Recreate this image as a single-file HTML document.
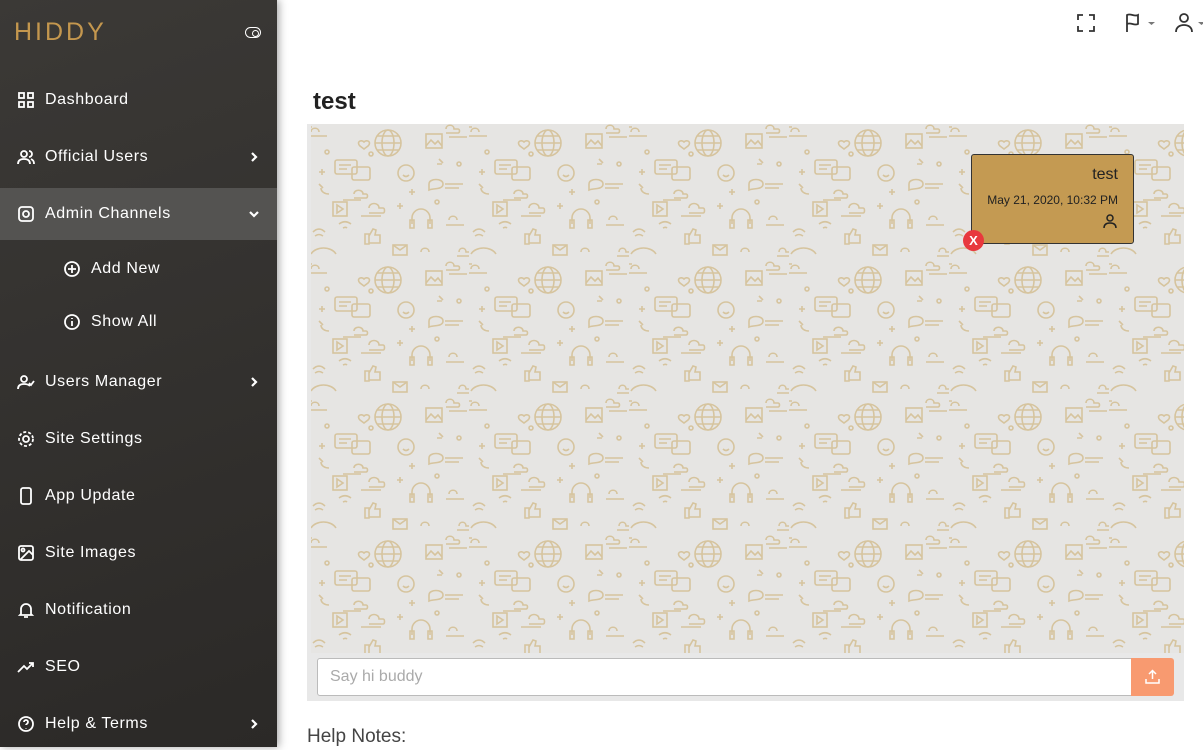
<!DOCTYPE html>
<html><head><meta charset="utf-8"><style>
*{box-sizing:border-box;margin:0;padding:0}
body{width:1203px;height:747px;overflow:hidden;font-family:"Liberation Sans",sans-serif;background:#fff;position:relative}
.sb{position:absolute;left:0;top:0;width:277px;height:747px;background:linear-gradient(160deg,#3b3936,#2b2927);box-shadow:2px 0 8px rgba(0,0,0,.35);color:#fff}
.logo{position:absolute;left:14px;top:18px;font-size:25px;letter-spacing:3px;color:#c4974e}
.tog{position:absolute;left:245px;top:27px;width:16px;height:11px;border:1.6px solid #fff;border-radius:6px}
.tog:after{content:"";position:absolute;right:1px;top:1.5px;width:5px;height:5px;border:1.5px solid #fff;border-radius:50%}
.it{position:absolute;left:0;width:277px;height:52px;display:flex;align-items:center;font-size:16px;letter-spacing:.6px}
.it svg{position:absolute;left:17px;width:18px;height:18px;fill:none;stroke:#fff;stroke-width:1.8}
.it span{position:absolute;left:45px}
.it svg.ar{left:247px;width:14px;height:14px;stroke-width:2.2}
.sub svg{left:63px}.sub span{left:91px}
.act{background:#545351}
.top svg{position:absolute;fill:none;stroke:#333;stroke-width:1.8}
h1{position:absolute;left:313px;top:88px;font-size:24px;font-weight:bold;color:#222}
.chat{position:absolute;left:307px;top:124px;width:877px;height:577px;background:#e8e8e8}
.pat{position:absolute;left:4px;top:0;width:873px;height:529px;background:#e6e5e3}
.msg{position:absolute;left:971px;top:154px;width:163px;height:90px;background:#c49a52;border:1px solid #333;border-radius:3px}
.x{position:absolute;left:963px;top:230px;width:21px;height:21px;border-radius:50%;background:#e8383d;color:#fff;font-size:13px;font-weight:bold;text-align:center;line-height:21px}
.inp{position:absolute;left:317px;top:658px;width:815px;height:38px;background:#fff;border:1px solid #bbb;border-radius:3px 0 0 3px;color:#aaa;font-size:16px;padding:9px 12px}
.btn{position:absolute;left:1131px;top:658px;width:43px;height:38px;background:#f89a70;border-radius:0 3px 3px 0}
.help{position:absolute;left:307px;top:726px;font-size:19px;color:#444}
</style></head><body>
<div class="sb">
<div class="logo">HIDDY</div><div class="tog"></div>
<div class="it" style="top:74px"><svg viewBox="0 0 18 18"><rect x="2" y="2" width="5" height="5"/><rect x="11" y="2" width="5" height="5"/><rect x="2" y="11" width="5" height="5"/><rect x="11" y="11" width="5" height="5"/></svg><span>Dashboard</span></div>
<div class="it" style="top:131px"><svg viewBox="0 0 18 18"><circle cx="7" cy="6" r="3"/><path d="M1 16c0-4 3-5 6-5s6 1 6 5M12 3a3 3 0 010 6M14 11c2 1 3 2 3 5"/></svg><span>Official Users</span><svg class="ar" viewBox="0 0 14 14"><path d="M5 3l4 4-4 4"/></svg></div>
<div class="it act" style="top:188px"><svg viewBox="0 0 18 18"><rect x="2" y="2" width="14" height="14" rx="3"/><circle cx="9" cy="9" r="3"/></svg><span>Admin Channels</span><svg class="ar" viewBox="0 0 14 14"><path d="M3 5l4 4 4-4"/></svg></div>
<div class="it sub" style="top:243px"><svg viewBox="0 0 18 18"><circle cx="9" cy="9" r="7"/><path d="M9 5v8M5 9h8"/></svg><span>Add New</span></div>
<div class="it sub" style="top:296px"><svg viewBox="0 0 18 18"><circle cx="9" cy="9" r="7"/><path d="M9 8v5M9 5v1"/></svg><span>Show All</span></div>
<div class="it" style="top:356px"><svg viewBox="0 0 18 18"><circle cx="7" cy="6" r="3"/><path d="M1 16c0-4 3-5 6-5s5 1 6 2M12 10l2 2 3-4"/></svg><span>Users Manager</span><svg class="ar" viewBox="0 0 14 14"><path d="M5 3l4 4-4 4"/></svg></div>
<div class="it" style="top:413px"><svg viewBox="0 0 18 18"><circle cx="9" cy="9" r="3"/><circle cx="9" cy="9" r="7" stroke-dasharray="3 2"/></svg><span>Site Settings</span></div>
<div class="it" style="top:470px"><svg viewBox="0 0 18 18"><rect x="4" y="1" width="10" height="16" rx="2"/></svg><span>App Update</span></div>
<div class="it" style="top:527px"><svg viewBox="0 0 18 18"><rect x="2" y="2" width="14" height="14" rx="2"/><circle cx="6" cy="6" r="1.5"/><path d="M16 11l-4-4-9 9"/></svg><span>Site Images</span></div>
<div class="it" style="top:584px"><svg viewBox="0 0 18 18"><path d="M4 13V8a5 5 0 0110 0v5l1 1H3zM7 16h4"/></svg><span>Notification</span></div>
<div class="it" style="top:641px"><svg viewBox="0 0 18 18"><path d="M1 14l6-6 3 3 6-6M12 5h4v4"/></svg><span>SEO</span></div>
<div class="it" style="top:698px"><svg viewBox="0 0 18 18"><circle cx="9" cy="9" r="7"/><path d="M7 7a2 2 0 114 0c0 2-2 2-2 3M9 13v.5"/></svg><span>Help &amp; Terms</span><svg class="ar" viewBox="0 0 14 14"><path d="M5 3l4 4-4 4"/></svg></div>
</div>
<div class="top">
<svg style="left:1076px;top:13px" width="20" height="20" viewBox="0 0 20 20"><path d="M2 7V2h5M13 2h5v5M18 13v5h-5M7 18H2v-5"/></svg>
<svg style="left:1124px;top:12px" width="36" height="22" viewBox="0 0 36 22"><path d="M3 20V3c4-2 7 2 11 0v9c-4 2-7-2-11 0"/><path d="M24 10h7l-3.5 3z" fill="#777" stroke="none"/></svg>
<svg style="left:1174px;top:12px" width="29" height="22" viewBox="0 0 29 22"><circle cx="10" cy="6" r="4"/><path d="M2 20c0-5 4-7 8-7s8 2 8 7"/><path d="M24 10h7l-3.5 3z" fill="#777" stroke="none"/></svg>
</div>
<h1>test</h1>
<div class="chat"><div class="pat"><svg width="873" height="529"><defs><pattern id="p" width="160" height="137" patternUnits="userSpaceOnUse" x="-2" y="0"><g fill="none" stroke="#d6c49e" stroke-width="1.6">
<circle cx="79" cy="19" r="13"/><ellipse cx="79" cy="19" rx="6" ry="13"/><path d="M66 19h26M68 12h22M68 26h22"/>
<path d="M55 18c-3-3-8 0-4 4l4 3 4-3c4-4-1-7-4-4z"/>
<rect x="117" y="10" width="16" height="14"/><path d="M117 22l5-6 4 4 3-3 4 5"/>
<rect x="26" y="36" width="22" height="14" rx="2"/><rect x="43" y="43" width="18" height="13" rx="2"/><path d="M30 41h12M30 45h8"/>
<circle cx="97" cy="49" r="8"/><path d="M94 51c2 2 4 2 6 0"/>
<path d="M120 60c0-6 14-6 14 0s-10 4-14 6z"/><path d="M136 60h18M136 64h14"/>
<path d="M34 76h18M45 70c0-5 9-5 9 0h3c2 0 2 4 0 4h-12"/>
<path d="M2 8c0-5 8-5 8 0M0 12h18M0 3h3"/>
<path d="M137 5c0-5 8-5 8 0h4c2 0 2 4 0 4h-12M140 13h18"/>
<rect x="24" y="78" width="14" height="14"/><path d="M28 81v8l6-4z"/>
<path d="M103 100v-6a9 9 0 0118 0v6M101 96h4v8h-4zM119 96h4v8h-4z"/>
<path d="M140 96c0-5 8-5 8 0M137 101h18"/>
<path d="M56 110h4v10h-4zM60 112l4-7 3 1-1 5h5v8h-11"/>
<path d="M150 128c0-5 7-5 7 0h3c2 0 2 4 0 4h-12"/>
<rect x="84" y="121" width="14" height="10"/><path d="M84 121l7 5 7-5"/>
<path d="M60 84c0-6 10-6 10 0h4c2 0 2 5 0 5h-14M52 92h20"/>
<path d="M4 108c4-4 8-4 12 0M6 112c3-2 5-2 8 0"/>
<path d="M30 100c4-3 8-3 12 0M34 104c2-1 3-1 4 0"/>
<path d="M112 128c0-5 8-5 8 0"/><path d="M12 64c0 4 4 6 8 6M10 60l4 4"/>
<circle cx="62" cy="30" r="2"/><circle cx="150" cy="40" r="2"/><circle cx="18" cy="28" r="2"/><circle cx="128" cy="78" r="2"/><path d="M10 48h6M13 45v6M88 82h6M91 79v6M100 68h6M103 65v6"/>
<path d="M2 130c5-8 20-8 25 0"/><path d="M130 35l4 4M128 40h5"/>
</g></pattern></defs><rect width="873" height="529" fill="url(#p)"/></svg></div></div>
<div class="msg">
<div style="position:absolute;right:15px;top:11px;font-size:16px;color:#222">test</div>
<div style="position:absolute;right:15px;top:38px;font-size:12px;color:#222">May 21, 2020, 10:32 PM</div>
<svg style="position:absolute;right:16px;top:58px" width="14" height="16" viewBox="0 0 14 16" fill="none" stroke="#222" stroke-width="1.5"><circle cx="7" cy="5" r="3"/><path d="M1 15c0-4 3-5 6-5s6 1 6 5"/></svg>
</div>
<div class="x">X</div>
<div class="inp">Say hi buddy</div>
<div class="btn"><svg style="position:absolute;left:14px;top:11px" width="15" height="15" viewBox="0 0 15 15" fill="none" stroke="#fff" stroke-width="1.5"><path d="M7.5 10V2M4 5l3.5-3.5L11 5M1 10v4h13v-4"/></svg></div>
<div class="help">Help Notes:</div>
</body></html>
